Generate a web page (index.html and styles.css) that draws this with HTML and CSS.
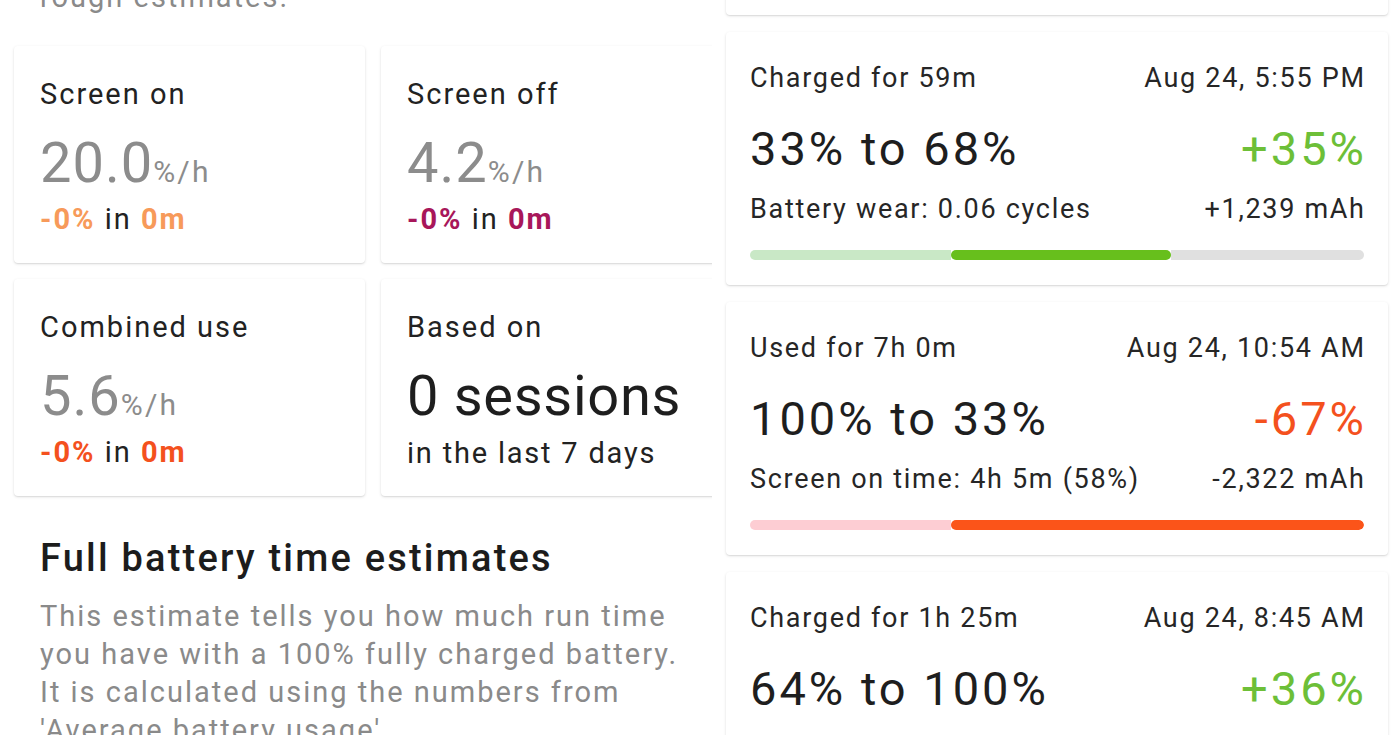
FILE: index.html
```html
<!DOCTYPE html>
<html lang="en">
<head>
<meta charset="utf-8">
<title>Battery usage</title>
<link rel="stylesheet" href="styles.css">
</head>
<body>
<div class="screen">
  <section class="pane pane-left">
    <p class="intro">rough estimates.</p>
    <div class="stat-grid">
      <div class="card stat">
        <div class="stat-label">Screen on</div>
        <div class="stat-value">20.0<span class="unit">%/h</span></div>
        <div class="stat-delta"><b class="c-amber">-0%</b> in <b class="c-amber">0m</b></div>
      </div>
      <div class="card stat">
        <div class="stat-label">Screen off</div>
        <div class="stat-value">4.2<span class="unit">%/h</span></div>
        <div class="stat-delta"><b class="c-berry">-0%</b> in <b class="c-berry">0m</b></div>
      </div>
      <div class="card stat">
        <div class="stat-label">Combined use</div>
        <div class="stat-value">5.6<span class="unit">%/h</span></div>
        <div class="stat-delta"><b class="c-orange">-0%</b> in <b class="c-orange">0m</b></div>
      </div>
      <div class="card stat">
        <div class="stat-label">Based on</div>
        <div class="stat-value dark">0 sessions</div>
        <div class="stat-note">in the last 7 days</div>
      </div>
    </div>
    <h2 class="section-title">Full battery time estimates</h2>
    <p class="section-text">This estimate tells you how much run time you have with a 100% fully charged battery. It is calculated using the numbers from 'Average battery usage'</p>
  </section>

  <section class="pane pane-right">
    <div class="card session session-stub"></div>

    <div class="card session">
      <div class="row row-small">
        <span>Charged for 59m</span>
        <span>Aug 24, 5:55 PM</span>
      </div>
      <div class="row row-big">
        <span>33% to 68%</span>
        <span class="c-green">+35%</span>
      </div>
      <div class="row row-small row-meta">
        <span>Battery wear: 0.06 cycles</span>
        <span>+1,239 mAh</span>
      </div>
      <div class="bar">
        <div class="seg seg-lightgreen" style="width:32.7%"></div>
        <div class="seg seg-green" style="width:35.9%"></div>
        <div class="seg seg-grey" style="width:31.4%"></div>
      </div>
    </div>

    <div class="card session">
      <div class="row row-small">
        <span>Used for 7h 0m</span>
        <span>Aug 24, 10:54 AM</span>
      </div>
      <div class="row row-big">
        <span>100% to 33%</span>
        <span class="c-orange">-67%</span>
      </div>
      <div class="row row-small row-meta">
        <span>Screen on time: 4h 5m (58%)</span>
        <span>-2,322 mAh</span>
      </div>
      <div class="bar">
        <div class="seg seg-pink" style="width:32.7%"></div>
        <div class="seg seg-orange" style="width:67.3%"></div>
      </div>
    </div>

    <div class="card session">
      <div class="row row-small">
        <span>Charged for 1h 25m</span>
        <span>Aug 24, 8:45 AM</span>
      </div>
      <div class="row row-big">
        <span>64% to 100%</span>
        <span class="c-green">+36%</span>
      </div>
      <div class="row row-small row-meta">
        <span>Battery wear: 0.06 cycles</span>
        <span>+1,251 mAh</span>
      </div>
    </div>
  </section>
</div>
</body>
</html>
```

FILE: styles.css
```css
* { box-sizing: border-box; }

html, body {
  margin: 0;
  padding: 0;
  background: #ffffff;
}

body {
  font-family: Roboto, "Noto Sans", "Liberation Sans", sans-serif;
  color: #222222;
  width: 1400px;
  height: 735px;
  overflow: hidden;
}

.screen {
  display: flex;
  height: 735px;
}

.pane-left {
  width: 712px;
  flex: none;
  overflow: hidden;
  padding-left: 14px;
}

.pane-right {
  flex: 1;
  padding-left: 14px;
  padding-right: 12px;
  display: flex;
  flex-direction: column;
  gap: 17px;
  overflow: hidden;
}

.intro {
  margin: -22px 0 0 26px;
  font-size: 29px;
  line-height: 38px;
  letter-spacing: 2px;
  color: #8a8a8a;
}

.card {
  background: #ffffff;
  border-radius: 4px;
  box-shadow: 0 1px 3px rgba(0, 0, 0, 0.13), 0 1px 1px rgba(0, 0, 0, 0.05);
}

.stat-grid {
  margin-top: 30px;
  display: grid;
  grid-template-columns: 351px 351px;
  grid-auto-rows: 217px;
  gap: 16px;
}

.stat {
  padding: 30px 26px 0 26px;
}

.stat-label {
  font-size: 29px;
  line-height: 36px;
  letter-spacing: 2px;
  color: #222222;
}

.stat-value {
  margin-top: 21px;
  font-size: 56px;
  line-height: 60px;
  letter-spacing: 1px;
  color: #8c8c8c;
  white-space: nowrap;
}

.stat-value.dark {
  color: #1e1e1e;
  letter-spacing: 0.7px;
}

.unit {
  font-size: 30px;
  letter-spacing: 2.2px;
}

.stat-delta {
  margin-top: -1px;
  font-size: 29px;
  line-height: 36px;
  letter-spacing: 2px;
  color: #222222;
}

.stat-delta b { font-weight: 700; }

.stat-note {
  margin-top: 9px;
  font-size: 29px;
  line-height: 36px;
  letter-spacing: 1.8px;
  color: #222222;
}

.c-amber { color: #f79a5a; }
.c-berry { color: #a8175a; }
.c-orange { color: #f4511e; }
.c-green { color: #6dbf38; }

.section-title {
  margin: 39px 0 0 26px;
  font-size: 38px;
  line-height: 46px;
  font-weight: 500;
  letter-spacing: 2.2px;
  color: #1c1c1c;
}

.section-text {
  margin: 16px 0 0 26px;
  width: 645px;
  font-size: 29px;
  line-height: 38px;
  letter-spacing: 2px;
  color: #8a8a8a;
}

.session {
  flex: none;
  padding: 29px 24px 25px 24px;
}

.session-stub {
  height: 32px;
  margin-top: -17px;
  padding: 0;
}

.row {
  display: flex;
  justify-content: space-between;
  align-items: baseline;
  white-space: nowrap;
}

.row-small {
  font-size: 27px;
  line-height: 34px;
  letter-spacing: 1.7px;
  color: #262626;
}

.row-big {
  margin-top: 29px;
  font-size: 47px;
  line-height: 50px;
  letter-spacing: 3px;
  color: #1e1e1e;
}

.row-small > span:last-child,
.row-big > span:last-child {
  margin-right: -1.7px;
}

.row-big > span:last-child {
  margin-right: -3px;
}

.row-meta {
  margin-top: 18px;
}

.bar {
  margin-top: 24px;
  height: 10px;
  display: flex;
  border-radius: 5px;
  overflow: hidden;
}

.seg { height: 100%; }
.seg-lightgreen { background: #c9e8c6; }
.seg-green { background: #67bf1c; border-radius: 5px; }
.seg-grey { background: #e0e0e0; }
.seg-pink { background: #fdcdd3; }
.seg-orange { background: #fb5419; border-radius: 5px; }
```
